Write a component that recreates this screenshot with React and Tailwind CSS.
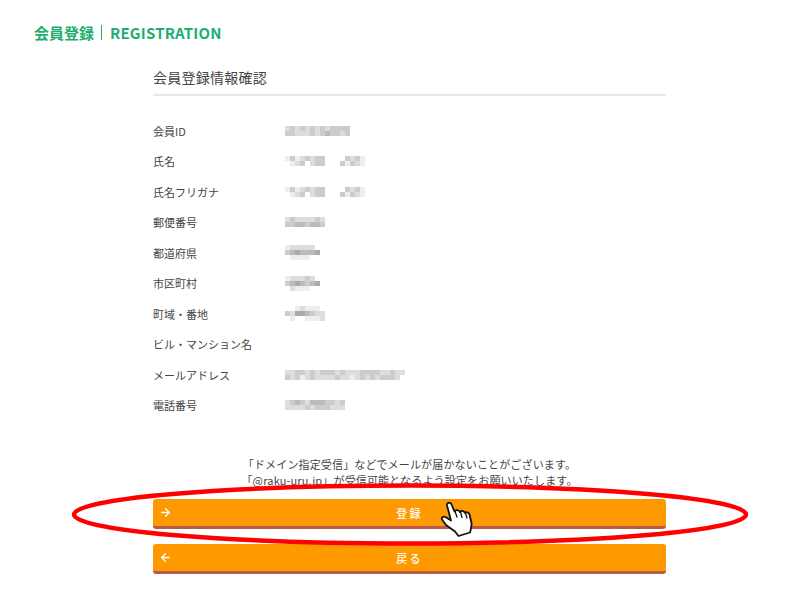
import { ArrowLeft, ArrowRight } from 'lucide-react';

const rows = [
  { label: '会員ID', blur: ['dcdcdcdcdcccc', 'ccdddcdcbccdc'] },
  { label: '氏名', blur: ['ecedcdcc...fcdcef', '.edcfdcc...cecdef'] },
  { label: '氏名フリガナ', blur: ['ecedcdcc...fcdcef', '.edcfdcc...cecdef'] },
  { label: '郵便番号', blur: ['dcddddcd', 'ccbbcbbc'] },
  { label: '都道府県', blur: ['edddddf.', 'cbabbbaf', 'feeeefff'] },
  { label: '市区町村', blur: ['edddcdf.', 'cbabcbaf', 'fdeeefff'] },
  { label: '町域・番地', blur: ['.fedeeef.', 'cdaabcddf', 'feffeeedf'] },
  { label: 'ビル・マンション名', blur: [] },
  { label: 'メールアドレス', blur: ['ddccdcdcccdcdddccccddcdd', 'cdcedcddddcddedcdcdcccdf'] },
  { label: '電話番号', blur: ['dcbcdbbbccdc', 'ddddcdcccddd'] },
];

const Mosaic = ({ cells }) => (
  <svg width={cells[0].length * 5} height={cells.length * 5} className="block">
    {cells.map((line, y) =>
      line.split('').map((c, x) =>
        c === '.' ? null : (
          <rect key={x + '-' + y} x={x * 5} y={y * 5} width="5" height="5" fill={'#' + c + c + c} />
        )
      )
    )}
  </svg>
);

const ActionButton = ({ icon, label }) => (
  <button className="grid grid-cols-[1fr_auto_1fr] items-center w-full h-[30px] bg-[#ff9900] border-b-[3px] border-[#b85c48] rounded-[3px] text-white text-[11px] font-medium tracking-[0.2em]">
    <span className="pl-[6px]">{icon}</span>
    <span className="pt-[2px]">{label}</span>
    <span />
  </button>
);

export default function App() {
  return (
    <div className="relative w-[800px] h-[600px] overflow-hidden bg-white text-[#444] font-['Noto_Sans_CJK_JP','Noto_Sans',sans-serif]">
      <header className="flex items-center h-[18px] mt-[23px] ml-[34px] text-[15px] font-bold leading-none text-[#1fae72]">
        <span>会員登録</span>
        <span className="w-px h-[15px] ml-[7px] mr-[8px] bg-[#1fae72]" />
        <span className="tracking-[0.2px]">REGISTRATION</span>
      </header>

      <main className="ml-[153px] w-[513px]">
        <h1 className="mt-[26px] h-[29px] border-b-2 border-[#e8e8e8] text-[14px] leading-[20px] tracking-[0.25px] font-normal">
          会員登録情報確認
        </h1>

        <dl className="mt-[19.5px]">
          {rows.map((row) => (
            <div key={row.label} className="flex items-center h-[30.5px] text-[11px]">
              <dt className="w-[132px] shrink-0">{row.label}</dt>
              <dd>{row.blur.length > 0 && <Mosaic cells={row.blur} />}</dd>
            </div>
          ))}
        </dl>

        <p className="mt-[35.5px] text-center text-[11px] leading-[16px] tracking-[0.16px]">
          「ドメイン指定受信」などでメールが届かないことがございます。
          <br />
          「@raku-uru.jp」が受信可能となるよう設定をお願いいたします。
        </p>

        <div className="mt-[11px] flex flex-col gap-[15px]">
          <ActionButton icon={<ArrowRight size={13} strokeWidth={2.5} />} label="登録" />
          <ActionButton icon={<ArrowLeft size={13} strokeWidth={2.5} />} label="戻る" />
        </div>
      </main>

      <svg className="absolute inset-0 pointer-events-none" width="800" height="600" viewBox="0 0 800 600">
        <ellipse cx="410" cy="514.5" rx="336" ry="29" fill="none" stroke="#ff0000" strokeWidth="4.5" />
        <path
          d="M447 505.5c-.5-2.500 3-4 4.300-1.500l3.200 7.500c1-2 4.500-1.800 5.300.5 1-1.800 4.200-1.300 5 .8 1.200-1.300 4-.6 4.700 1.700l2 8.500c.3 3-.5 6-1.500 9.500l-11.500 3.500-3.500-4.500-9-6.500-4-5.500c-.7-2 1.500-3.700 3.500-2.500l5.500 3.500z"
          fill="#ffffff"
          stroke="#111111"
          strokeWidth="1.800"
          strokeLinejoin="round"
        />
        <path d="M455 511.500l2 5.500M460.500 512l1.500 5.500M465.500 513l1.500 5" fill="none" stroke="#111111" strokeWidth="1.300" strokeLinecap="round" />
      </svg>
    </div>
  );
}
